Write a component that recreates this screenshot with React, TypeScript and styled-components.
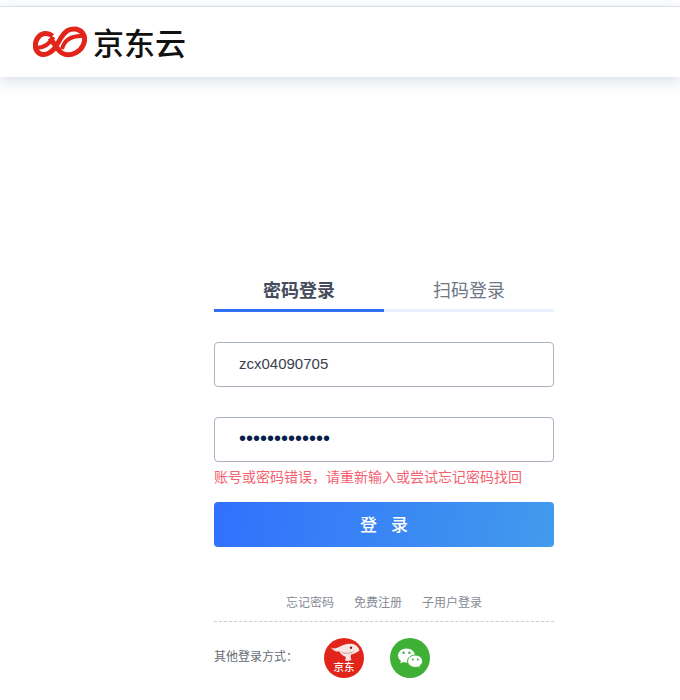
import React from 'react'
import styled, { createGlobalStyle } from 'styled-components'

const GlobalStyle = createGlobalStyle`
  html, body {
    margin: 0;
    padding: 0;
    background: #fff;
    font-family: "Liberation Sans", "Noto Sans CJK SC", sans-serif;
  }
`

const Page = styled.div`
  width: 680px;
  height: 700px;
  overflow: hidden;
  padding-top: 6px;
  box-sizing: border-box;
  background: #fff;
`

const Header = styled.header`
  height: 70px;
  border-top: 1px solid #dcdfe3;
  padding-left: 33px;
  display: flex;
  align-items: center;
  gap: 6px;
  background: #fff;
  box-shadow: 0 4px 14px rgba(120, 140, 175, 0.3);
`

const LogoText = styled.span`
  font-family: "Noto Sans CJK SC", sans-serif;
  font-size: 31px;
  font-weight: 500;
  line-height: 36px;
  color: #111;
`

const Form = styled.main`
  width: 340px;
  margin: 190px 0 0 214px;
`

const Tabs = styled.div`
  display: flex;
  height: 45px;
`

const TabItem = styled.div<{ $active?: boolean }>`
  flex: 1;
  height: 45px;
  box-sizing: border-box;
  padding-top: 3px;
  text-align: center;
  font-family: "Noto Sans CJK SC", sans-serif;
  font-size: 18px;
  line-height: 38px;
  font-weight: ${(p) => (p.$active ? 700 : 400)};
  color: ${(p) => (p.$active ? '#444b5c' : '#6f7785')};
  border-bottom: 3px solid ${(p) => (p.$active ? '#3170f4' : '#e9f1fe')};
`

const Field = styled.input`
  display: block;
  width: 100%;
  height: 45px;
  box-sizing: border-box;
  border: 1px solid #a9b2bf;
  border-radius: 4px;
  padding: 0 24px 2px;
  outline: none;
  background: #fff;
  font-family: "Liberation Sans", sans-serif;
  font-size: 15px;
  color: #3a4250;
`

const UserField = styled(Field)`
  margin-top: 30px;
`

const PassField = styled(Field)`
  margin-top: 30px;
  font-size: 20px;
  color: #06204a;
`

const ErrorText = styled.div`
  margin-top: 4px;
  height: 20px;
  font-family: "Noto Sans CJK SC", sans-serif;
  font-size: 14px;
  line-height: 20px;
  color: #f4616f;
  white-space: nowrap;
`

const SubmitButton = styled.button`
  display: block;
  width: 100%;
  height: 45px;
  margin-top: 16px;
  border: 0;
  border-radius: 4px;
  padding: 0 0 2px;
  background: linear-gradient(100deg, #3170fd 0%, #429bec 100%);
  color: #fff;
  font-family: "Noto Sans CJK SC", sans-serif;
  font-size: 17px;
  font-weight: 500;
  word-spacing: 10px;
`

const Links = styled.nav`
  margin-top: 45px;
  height: 29px;
  display: flex;
  justify-content: center;
  gap: 20px;
  border-bottom: 1px dashed #c9ccd1;
`

const LinkItem = styled.a`
  font-family: "Noto Sans CJK SC", sans-serif;
  font-size: 12px;
  line-height: 20px;
  color: #858b95;
  white-space: nowrap;
`

const OtherRow = styled.div`
  margin-top: 16px;
  display: flex;
  align-items: center;
`

const OtherLabel = styled.span`
  width: 110px;
  padding-bottom: 4px;
  font-family: "Noto Sans CJK SC", sans-serif;
  font-size: 12px;
  line-height: 36px;
  color: #666b73;
  white-space: nowrap;
`

const Badge = styled.a<{ $bg: string }>`
  position: relative;
  width: 40px;
  height: 40px;
  margin-right: 26px;
  border-radius: 50%;
  background: ${(p) => p.$bg};
  overflow: hidden;
  display: block;
`

const BadgeIcon = styled.svg`
  position: absolute;
  left: 0;
  top: 0;
`

const BadgeText = styled.span`
  position: absolute;
  left: 0;
  right: 0;
  top: 23px;
  text-align: center;
  font-family: "Noto Sans CJK SC", sans-serif;
  font-size: 10.5px;
  font-weight: 500;
  line-height: 12px;
  color: #fff;
  white-space: nowrap;
`

const LogoMark = () => (
  <svg width="54" height="33" viewBox="0 0 54 33" fill="none" stroke="#e1251b">
    <path
      strokeWidth="5"
      d="M19.5 10C14.5 5.8 8 7 4.6 12C1 17.5 1.8 24.5 6 27.2C11 30 17 27.5 21 23C26 17 28 8.5 34.5 4.6C40.5 1.6 47.5 2.6 50.6 8.6C53.6 15 49.6 23 43 26.6C38 29.2 33 29.5 29 27C26 25 24 22 22 19L17 12"
    />
    <path strokeWidth="4" d="M3 22C9.5 22 16.5 18.5 20.5 11" />
    <path strokeWidth="4" d="M29 23C31 15 37.5 9 51 10" />
  </svg>
)

const JoyIcon = () => (
  <BadgeIcon width="40" height="40" viewBox="0 0 40 40">
    <path
      d="M7 9.5C10 11 12 10.5 15 9C19 6.5 24 5 29 6C32 6.5 34.5 9 35.5 12.5C33 14.5 30 16 27 16.5C26.5 18 26.5 20 27.5 22L24 23L21 22.5L22 19C19 18 16.5 16 15.5 13.5C13 14 9.5 13 7 9.5Z"
      fill="#f7e6e3"
    />
    <path d="M16.5 13C20 15.5 26 15.5 31 12.5C28 16 20 17.5 16.5 13Z" fill="#c79a96" />
    <circle cx="27" cy="9.8" r="1.2" fill="#6b2a26" />
  </BadgeIcon>
)

const WechatIcon = () => (
  <BadgeIcon width="40" height="40" viewBox="0 0 40 40">
    <path
      d="M16.5 10.5C11.8 10.5 8 13.7 8 17.6C8 19.8 9.2 21.7 11 23L10.2 25.6L13.2 24C14.3 24.4 15.4 24.6 16.5 24.6C21.2 24.6 25 21.5 25 17.6C25 13.7 21.2 10.5 16.5 10.5Z"
      fill="#fff"
    />
    <path
      d="M32.6 23.2C32.6 19.8 29.4 17 25.2 17C21 17 17.6 19.8 17.6 23.2C17.6 26.6 21 29.4 25.2 29.4C26.1 29.4 27 29.2 27.8 29L30.4 30.4L29.7 28C31.5 26.8 32.6 25.1 32.6 23.2Z"
      fill="#fff"
      stroke="#3eb035"
      strokeWidth="1"
    />
    <circle cx="13.6" cy="14.8" r="1.2" fill="#3eb035" />
    <circle cx="19.4" cy="14.8" r="1.2" fill="#3eb035" />
    <circle cx="22.8" cy="21.6" r="1" fill="#3eb035" />
    <circle cx="27.8" cy="21.6" r="1" fill="#3eb035" />
  </BadgeIcon>
)

const App = () => {
  return (
    <Page>
      <GlobalStyle />
      <Header>
        <LogoMark />
        <LogoText>京东云</LogoText>
      </Header>
      <Form>
        <Tabs>
          <TabItem $active>密码登录</TabItem>
          <TabItem>扫码登录</TabItem>
        </Tabs>
        <UserField type="text" value="zcx04090705" readOnly />
        <PassField type="password" value="abcdefghijklm" readOnly />
        <ErrorText>账号或密码错误，请重新输入或尝试忘记密码找回</ErrorText>
        <SubmitButton>登 录</SubmitButton>
        <Links>
          <LinkItem>忘记密码</LinkItem>
          <LinkItem>免费注册</LinkItem>
          <LinkItem>子用户登录</LinkItem>
        </Links>
        <OtherRow>
          <OtherLabel>其他登录方式：</OtherLabel>
          <Badge $bg="#e1251b">
            <JoyIcon />
            <BadgeText>京东</BadgeText>
          </Badge>
          <Badge $bg="#3eb035">
            <WechatIcon />
          </Badge>
        </OtherRow>
      </Form>
    </Page>
  )
}

export default App
